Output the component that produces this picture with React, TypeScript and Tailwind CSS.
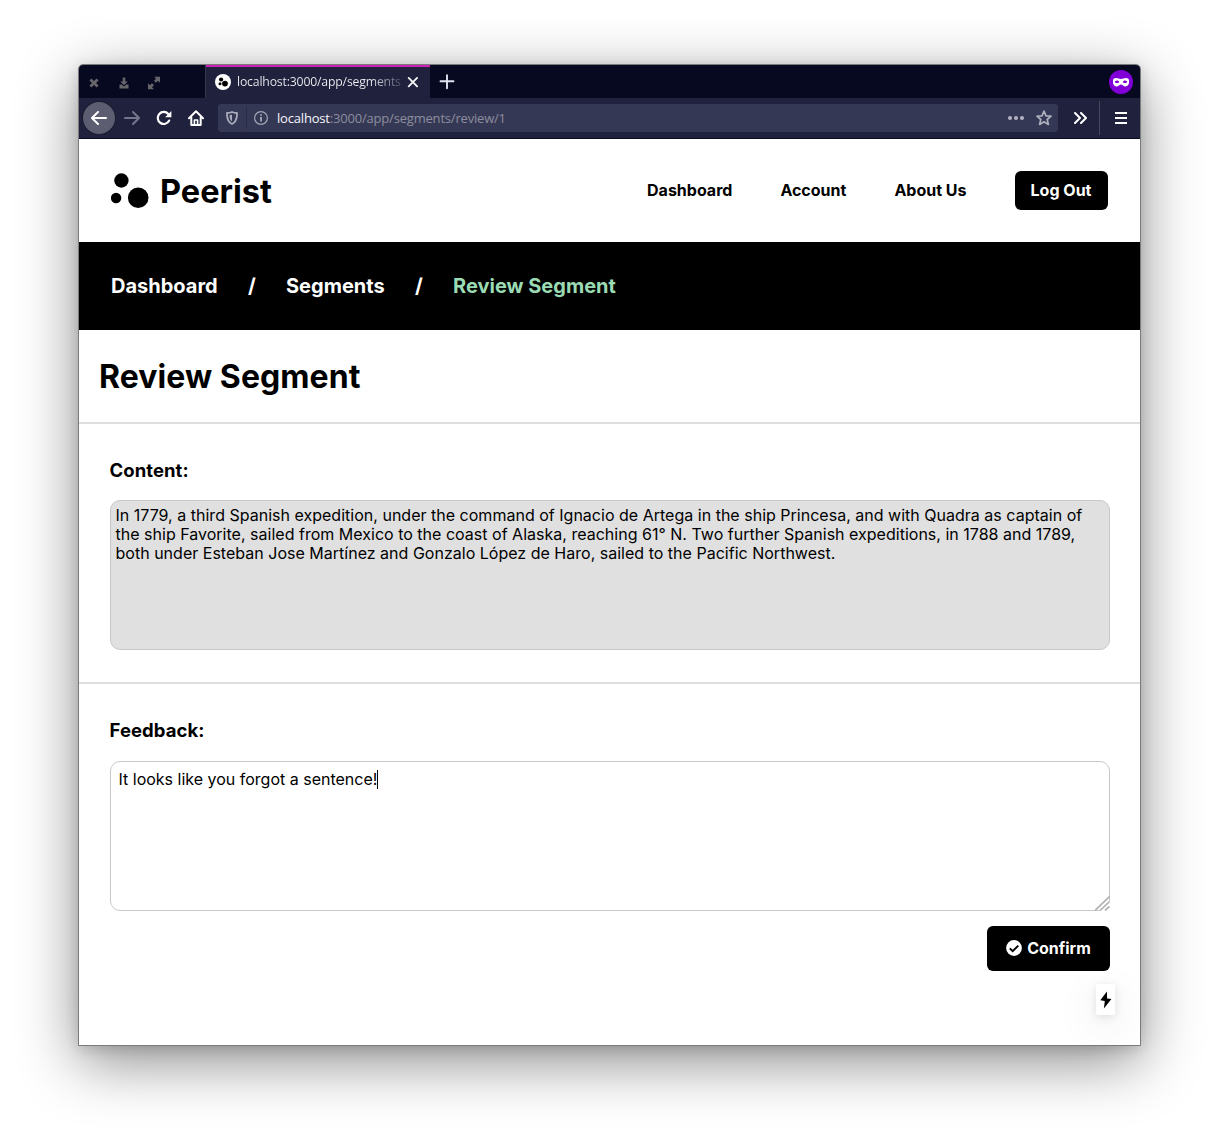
import React from 'react';

function WindowTabs() {
  return (
    <div className="flex h-[33px] bg-[#070920]">
      <div className="flex w-[126px] items-center gap-[18px] pl-[9px] pt-[2px] text-[#66666a]">
        <svg width="12" height="12" viewBox="0 0 12 12" fill="none" stroke="currentColor" strokeWidth="2.8">
          <path d="M2.4 2.4l7.2 7.2M9.6 2.4L2.4 9.6" />
        </svg>
        <svg width="12" height="12" viewBox="0 0 12 12" fill="currentColor">
          <path d="M4.700 0.500h2.600v4h2.500L6 8.300 2.200 4.500h2.500zM1.500 7.500h2.200L6 9.500l2.300-2h2.200v3.900h-9z" />
        </svg>
        <svg className="-ml-px" width="14" height="14" viewBox="0 0 14 14" fill="currentColor">
          <path d="M7.200 0.700H13v6l-2-2-2 2-2-2 2-2zM1 7.300l2 2 2-2 2 2-2 2 2 2H1z" />
        </svg>
      </div>
      <div className="flex w-[225px] items-center border-l border-[#34364a] bg-[#1f213d] shadow-[inset_0_2px_0_#ce20b4] pl-[9px]">
        <svg width="16" height="16" viewBox="0 0 16 16">
          <circle cx="8" cy="8" r="8" fill="#fff" />
          <circle cx="6.1" cy="5.5" r="2.1" />
          <circle cx="5" cy="9.7" r="1.5" />
          <circle cx="10" cy="9.6" r="2.9" />
        </svg>
        <div className="ml-[6px] w-[166px] whitespace-nowrap bg-[linear-gradient(to_right,#f2f2f5_80%,#1f213d_104%)] bg-clip-text font-['Open_Sans',sans-serif] text-[12.25px] leading-[18px] tracking-[-0.180px] text-transparent">
          localhost:3000/app/segments
        </div>
        <svg className="ml-[4px]" width="12" height="12" viewBox="0 0 12 12" stroke="#f5f5f8" strokeWidth="1.9" strokeLinecap="round">
          <path d="M1.7 1.9l8.4 8.4M10.1 1.9l-8.4 8.4" />
        </svg>
      </div>
      <svg className="ml-[9px] mt-[9px]" width="16" height="16" viewBox="0 0 16 16" stroke="#dfe2f0" strokeWidth="1.9" strokeLinecap="round">
        <path d="M8 1.3v12.9M1.5 7.3h13" />
      </svg>
      <svg className="ml-auto mr-[7px] mt-[5px]" width="24" height="24" viewBox="0 0 24 24">
        <circle cx="12" cy="12" r="12" fill="#8000d7" />
        <path
          fill="#fff"
          fillRule="evenodd"
          d="M7.1 8c2 0 3.2.9 4.9.9S14.9 8 16.9 8c2.3 0 3.2 1 3.2 3.2 0 3.2-1.2 5.2-3.6 5.2-2.1 0-2.9-2-4.5-2s-2.4 2-4.5 2c-2.4 0-3.6-2-3.6-5.2C3.9 9 4.800 8 7.100 8zM8 10.400c-1.200 0-2 .8-2.300 1.500.5.800 1.200 1.100 2.300 1.100s1.900-.4 2.300-1.100c-.4-.8-1.200-1.500-2.300-1.500zm8 0c-1.200 0-1.900.7-2.300 1.500.4.700 1.200 1.100 2.300 1.100s1.800-.3 2.300-1.100c-.3-.7-1.100-1.500-2.300-1.500z"
        />
      </svg>
    </div>
  );
}

function Toolbar() {
  return (
    <div className="flex h-[41px] items-center border-b border-[#0b0c20] bg-[#1f213d] pl-[4px]">
      <div className="flex size-8 items-center justify-center rounded-full bg-[#5c5d70] ring-1 ring-[#1a1b30]">
        <svg width="16" height="16" viewBox="0 0 16 16" fill="none" stroke="#fff" strokeWidth="2" strokeLinecap="round" strokeLinejoin="round">
          <path d="M15 8H1.400M7 2L1 8l6 6" />
        </svg>
      </div>
      <svg className="ml-[9px]" width="16" height="16" viewBox="0 0 16 16" fill="none" stroke="#74768b" strokeWidth="2" strokeLinecap="round" strokeLinejoin="round">
        <path d="M1 8h13.600M9 2l6 6-6 6" />
      </svg>
      <svg className="ml-[16px]" width="16" height="16" viewBox="0 0 16 16" fill="none" stroke="#fff" strokeWidth="2.200" strokeLinecap="round">
        <path d="M13.200 10.600A6 6 0 1 1 12.300 4" />
        <path fill="#fff" stroke="none" d="M15.400.9v6.300h-6.300z" />
      </svg>
      <svg className="ml-[16px]" width="16" height="16" viewBox="0 0 16 16" fill="none" stroke="#fff" strokeWidth="2" strokeLinecap="round" strokeLinejoin="round">
        <path d="M1 8.200L8 1.300l7 6.900M3.300 7v8h9.400V7" />
        <path strokeWidth="1.600" d="M6.400 14.500V10h3.200v4.500" />
      </svg>
      <div className="ml-[14px] flex h-7 w-[840px] items-center rounded-[3px] bg-[#353855] pl-[8px] pr-[6px]">
        <svg width="12" height="14" viewBox="0 0 12 14" fill="none" stroke="#a9abbb" strokeWidth="1.800" strokeLinejoin="round">
          <path d="M6 1c1.700.9 3.300 1 5 1 .2 5.500-1 9-5 11C2 11 .8 7.500 1 2c1.700 0 3.300-.1 5-1z" />
          <path d="M6 3.600v6.800c-1.900-1.300-2.400-3.200-2.500-6.200.9 0 1.700-.2 2.500-.6z" fill="#a9abbb" stroke="none" />
        </svg>
        <div className="ml-[8px] h-[22px] w-px bg-[#282a46]" />
        <svg className="ml-[7px]" width="14" height="14" viewBox="0 0 14 14" fill="none" stroke="#a4a6b6">
          <circle cx="7" cy="7" r="6.400" strokeWidth="1.200" />
          <path d="M7 6v4.600M7 3.200v1.600" strokeWidth="1.900" />
        </svg>
        <div className="ml-[9px] font-['Open_Sans',sans-serif] text-[13px] leading-[18px] tracking-[-0.190px] text-[#8c8e9e]">
          <span className="text-[#f6f6fa]">localhost</span>:3000/app/segments/review/1
        </div>
        <svg className="ml-auto" width="16" height="4" viewBox="0 0 16 4" fill="#b2b3c1">
          <circle cx="2" cy="2" r="2" />
          <circle cx="8" cy="2" r="2" />
          <circle cx="14" cy="2" r="2" />
        </svg>
        <svg className="ml-[12px]" width="16" height="16" viewBox="0 0 16 16" fill="none" stroke="#aeb0be" strokeWidth="1.700" strokeLinejoin="round">
          <path d="M8 1.200l2 4.600 5 .4-3.800 3.300 1.200 4.900L8 11.800l-4.400 2.600 1.200-4.900L1 6.200l5-.4z" />
        </svg>
      </div>
      <svg className="ml-[16px]" width="13" height="12" viewBox="0 0 13 12" fill="none" stroke="#fff" strokeWidth="2" strokeLinecap="round" strokeLinejoin="round">
        <path d="M1 1l5 5-5 5M7 1l5 5-5 5" />
      </svg>
      <div className="ml-[12px] h-[34px] w-px bg-[#45475f]" />
      <svg className="ml-[15px]" width="12" height="12" viewBox="0 0 12 12" fill="#fff">
        <path d="M0 0h12v2H0zM0 5h12v2H0zM0 10h12v2H0z" />
      </svg>
    </div>
  );
}

function Header() {
  return (
    <header className="flex h-[103px] items-center pl-[32px] pr-[32px]">
      <svg width="38" height="36" viewBox="0 0 38 36">
        <circle cx="10.400" cy="7.500" r="7.200" />
        <circle cx="5.100" cy="25" r="5.200" />
        <circle cx="27.200" cy="24.700" r="10.300" />
      </svg>
      <span className="ml-[11px] mt-[2px] text-[32.500px] leading-[40px] font-bold">Peerist</span>
      <nav className="ml-auto flex items-center text-base font-bold">
        <div className="mr-[48.500px] flex gap-[48px] pb-[2px]">
          <a>Dashboard</a>
          <a>Account</a>
          <a>About Us</a>
        </div>
        <button className="h-[39px] w-[93px] rounded-[6px] bg-black pr-px pb-[2px] text-white">Log Out</button>
      </nav>
    </header>
  );
}

function Section({ label, children }: { label: string; children: React.ReactNode }) {
  return (
    <section className="pl-[31px] pr-[30px] pt-[35px]">
      <h2 className="-ml-[0.500px] text-[18.500px] leading-[23px] font-bold tracking-[0.060px]">{label}</h2>
      {children}
    </section>
  );
}

export default function App() {
  return (
    <div className="h-[1138px] w-[1219px] overflow-hidden bg-white pl-[78px] pt-[64px] font-['Inter',sans-serif] text-black">
      <div className="h-[982px] w-[1063px] rounded-t-[5px] border border-[#7b7b7b] bg-white shadow-[0_3px_14px_rgba(0,0,0,0.14),0_16px_60px_rgba(0,0,0,0.45)]">
        <div className="overflow-hidden rounded-t-[4px]">
          <WindowTabs />
          <Toolbar />
        </div>
        <Header />
        <div className="flex h-[88px] items-center gap-[30.300px] bg-black pl-[32px] text-xl font-bold text-white">
          <span>Dashboard</span>
          <span>/</span>
          <span>Segments</span>
          <span>/</span>
          <span className="text-[#9adbb4]">Review Segment</span>
        </div>
        <div className="flex h-[94px] items-center border-b-2 border-[#dedede] pt-[2px] pl-[20px]">
          <h1 className="text-[32px] leading-[40px] font-bold tracking-[0.070px]">Review Segment</h1>
        </div>
        <div className="h-[260px] border-b-2 border-[#dedede]">
          <Section label="Content:">
            <div className="mt-[18px] h-[150px] rounded-[10px] border border-[#c8c8c8] bg-[#e0e0e0] px-[4.500px] pt-[5px] text-base leading-[19px] tracking-[0.012px]">
              In 1779, a third Spanish expedition, under the command of Ignacio de Artega in the ship Princesa, and with Quadra as captain of
              <br />
              the ship Favorite, sailed from Mexico to the coast of Alaska, reaching 61° N. Two further Spanish expeditions, in 1788 and 1789,
              <br />
              both under Esteban Jose Martínez and Gonzalo López de Haro, sailed to the Pacific Northwest.
            </div>
          </Section>
        </div>
        <Section label="Feedback:">
          <div className="relative mt-[19px] flex h-[150px] items-start rounded-[10px] border border-[#c8c8c8] px-[7.500px] pt-[8px] text-base leading-[19px]">
            <span>It looks like you forgot a sentence!</span>
            <span className="-ml-[0.500px] h-[19px] w-px bg-black" />
            <svg className="absolute -bottom-px -right-px" width="15" height="15" viewBox="0 0 15 15" stroke="#b3b3b3" strokeWidth="1.700">
              <path d="M5 15h10V5z" fill="#fff" stroke="none" />
              <path d="M0 14.500L14.500 0.500M5 14.500l9.500-9M10 14.500l4.500-4" />
            </svg>
          </div>
          <div className="mt-[15px] flex justify-end">
            <button className="flex h-[45px] w-[123px] items-center justify-center gap-[5px] rounded-[6px] bg-black pb-px text-base font-bold text-white">
              <svg width="16" height="16" viewBox="0 0 16 16">
                <circle cx="8" cy="8" r="7.900" fill="#fff" />
                <path d="M3.800 8.400l2.900 2.800 5.600-5.600" fill="none" stroke="#000" strokeWidth="2" />
              </svg>
              Confirm
            </button>
          </div>
          <div className="-mr-[5px] mt-[13px] flex justify-end">
            <div className="flex h-[31px] w-[19px] items-center justify-center rounded-[2px] bg-white shadow-[0_11px_40px_rgba(0,0,0,0.12),0_2px_10px_rgba(0,0,0,0.11)]">
              <svg width="12" height="18" viewBox="0 0 12 18">
                <path d="M6.900 0.500L0.300 9.200l4.500.7-.9 7.700 7.500-9.500-4.300-.5z" />
              </svg>
            </div>
          </div>
        </Section>
      </div>
    </div>
  );
}
